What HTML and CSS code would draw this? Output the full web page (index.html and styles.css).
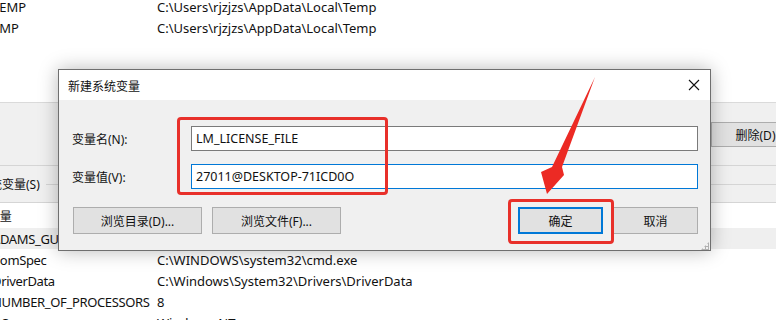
FILE: index.html
```html
<!DOCTYPE html>
<html lang="zh-CN">
<head>
  <meta charset="UTF-8" />
  <title>新建系统变量</title>
  <link rel="stylesheet" href="styles.css">
</head>
<body>

<div class="window">
  <div class="user-list">
    <div class="row"><span class="name">TEMP</span><span class="value">C:\Users\rjzjzs\AppData\Local\Temp</span></div>
    <div class="row"><span class="name">TMP</span><span class="value">C:\Users\rjzjzs\AppData\Local\Temp</span></div>
  </div>

  <div class="panel">
    <div class="user-buttons">
      <button class="btn btn-side">删除(D)</button>
    </div>
    <div class="group-end"></div>
    <div class="group-title"><span>系统变量(S)</span></div>
  </div>

  <div class="sys-list">
    <div class="head"><span class="name">变量</span></div>
    <div class="row selected"><span class="name">ADAMS_GUI_LOCATION</span><span class="value">C:\MSC.Software\Adams\2020</span></div>
    <div class="row"><span class="name">ComSpec</span><span class="value">C:\WINDOWS\system32\cmd.exe</span></div>
    <div class="row"><span class="name">DriverData</span><span class="value">C:\Windows\System32\Drivers\DriverData</span></div>
    <div class="row"><span class="name">NUMBER_OF_PROCESSORS</span><span class="value">8</span></div>
    <div class="row"><span class="name">OS</span><span class="value">Windows_NT</span></div>
  </div>
</div>

<div class="dialog">
  <div class="titlebar">
    <span class="title">新建系统变量</span>
    <span class="close">
      <svg width="12" height="12" viewBox="0 0 12 12"><path d="M1 1 L11 11 M11 1 L1 11" stroke="#111" stroke-width="1.1" fill="none"/></svg>
    </span>
  </div>
  <div class="body">
    <div class="fields">
      <label for="var-name">变量名(N):</label>
      <input type="text" id="var-name" value="LM_LICENSE_FILE" />
      <label for="var-value">变量值(V):</label>
      <input type="text" id="var-value" class="focused" value="27011@DESKTOP-71ICD0O" />
    </div>
    <div class="actions">
      <div class="group">
        <button class="btn btn-wide">浏览目录(D)...</button>
        <button class="btn btn-wide">浏览文件(F)...</button>
      </div>
      <div class="group">
        <button class="btn btn-ok">确定</button>
        <button class="btn btn-cancel">取消</button>
      </div>
    </div>
    <span class="grip"></span>
  </div>
</div>

<div class="mark mark-fields"></div>
<div class="mark mark-ok"></div>
<svg class="arrow" width="776" height="320" viewBox="0 0 776 320">
  <polygon points="595,77 562,167 564,175 547,194 541,172 552,167" fill="#ec2a24"/>
</svg>

</body>
</html>
```

FILE: styles.css
```css
body {
  margin: 0;
  width: 776px;
  height: 320px;
  overflow: hidden;
  position: relative;
  background: #ffffff;
  font-family: "Noto Sans", "Noto Sans CJK SC", sans-serif;
  font-size: 13px;
  color: #111;
}
.window {
  margin-left: -9px;
}
.row, .head {
  display: flex;
  align-items: center;
  height: 20.5px;
  white-space: nowrap;
}
.name {
  width: 165px;
  padding-left: 1px;
  overflow: hidden;
  letter-spacing: -0.35px;
}
.user-list {
  height: 106px;
  margin-top: -3px;
  border-bottom: 1px solid #dadada;
  box-sizing: border-box;
}
.user-list .name {
  letter-spacing: 0;
}
.panel {
  background: #f0f0f0;
  height: 99px;
  box-sizing: border-box;
}
.user-buttons {
  display: flex;
  justify-content: flex-end;
  padding-top: 19px;
  margin-right: -24px;
}
.btn {
  font-family: "Noto Sans", "Noto Sans CJK SC", sans-serif;
  font-size: 12px;
  color: #111;
  background: #e1e1e1;
  border: 1px solid #adadad;
  height: 27px;
  padding: 0;
  margin: 0;
}
.btn-side {
  width: 89px;
  height: 25px;
}
.group-end {
  margin-top: 18px;
  border-top: 1px solid #d5d5d5;
}
.group-title {
  display: flex;
  align-items: center;
  height: 36px;
}
.group-title span {
  margin-left: -13px;
  padding-right: 6px;
  font-size: 12px;
}
.group-title::after {
  content: "";
  flex: 1;
  border-top: 1px solid #d5d5d5;
}
.sys-list {
  border-top: 1px solid #d5d5d5;
}
.head {
  height: 25px;
  font-size: 12px;
}
.head .name {
  margin-left: -4px;
}
.sys-list .row {
  height: 21px;
}
.sys-list .row.selected {
  background: #efefef;
}

/* dialog */
.dialog {
  position: absolute;
  left: 58px;
  top: 69px;
  width: 653px;
  height: 182px;
  box-sizing: border-box;
  border: 1px solid #6f6f6f;
  background: #f0f0f0;
  box-shadow: 0 0 18px rgba(0,0,0,0.28);
  font-size: 12px;
}
.titlebar {
  height: 30px;
  background: #fff;
  display: flex;
  align-items: center;
  justify-content: space-between;
  padding: 0 9px;
}
.title {
  font-size: 12px;
  padding-top: 1px;
}
.close {
  display: flex;
  margin-right: 1px;
}
.body {
  position: relative;
  padding: 26px 12px 0 13px;
}
.fields {
  display: grid;
  grid-template-columns: 119px 1fr;
  row-gap: 13px;
  align-items: center;
}
.fields label {
  font-size: 12px;
}
.fields input {
  height: 25px;
  box-sizing: border-box;
  border: 1px solid #7a7a7a;
  padding: 0 4px;
  font-family: "Noto Sans", "Noto Sans CJK SC", sans-serif;
  font-size: 12.5px;
  color: #111;
  outline: none;
  margin: 0;
}
.fields input.focused {
  border-color: #0078d7;
}
.actions {
  display: flex;
  justify-content: space-between;
  margin-top: 18px;
  padding-left: 1px;
}
.group {
  display: flex;
  gap: 10px;
}
.btn-wide {
  width: 129px;
}
.btn-ok, .btn-cancel {
  width: 85px;
}
.btn-ok {
  border: 2px solid #0078d7;
}
.grip {
  position: absolute;
  right: 1px;
  bottom: -16px;
  width: 8px;
  height: 8px;
  background:
    radial-gradient(circle, #b0b0b0 1px, transparent 1.2px) 0 0 / 3px 3px;
  clip-path: polygon(100% 0, 100% 100%, 0 100%);
}

/* annotations */
.mark {
  position: absolute;
  border: 3px solid #e8302a;
  border-radius: 4px;
  box-sizing: border-box;
}
.mark-fields {
  left: 177px;
  top: 117px;
  width: 211px;
  height: 78px;
}
.mark-ok {
  left: 508px;
  top: 199px;
  width: 106px;
  height: 45px;
}
.arrow {
  position: absolute;
  left: 0;
  top: 0;
}
```
